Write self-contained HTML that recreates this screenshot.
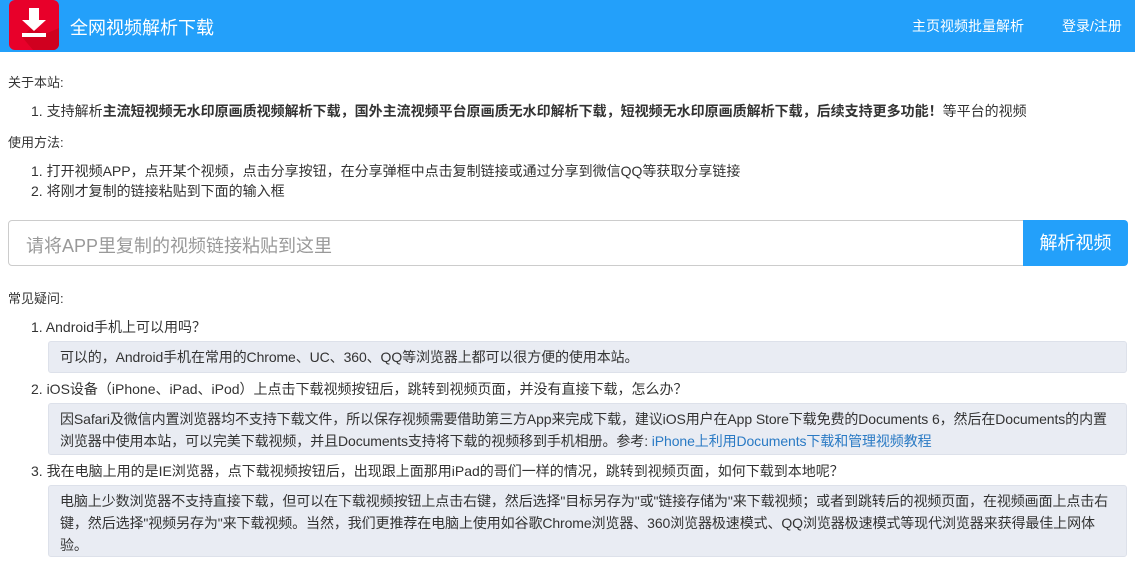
<!DOCTYPE html>
<html><head><meta charset="utf-8"><style>
*{margin:0;padding:0;box-sizing:border-box}
body{width:1135px;height:563px;overflow:hidden;background:#fff;font-family:"Liberation Sans","Noto Sans CJK SC",sans-serif;font-size:14px;color:#333}
.hd{height:52px;background:#23a0fa;position:relative;color:#fff}
.logo{position:absolute;left:9px;top:0;width:50px;height:50px;background:#e8002a;border-radius:6px;overflow:hidden}
.title{position:absolute;left:70px;top:14px;font-size:18px}
.nav{position:absolute;top:16px;font-size:14px}
.t{position:absolute;left:8px;font-size:13px}
.li{position:absolute;left:31px;white-space:nowrap}
.box{position:absolute;left:48px;right:8px;background:#e9ecf3;border:1px solid #dde1ea;border-radius:3px;padding:4px 11px;line-height:22px;letter-spacing:-0.1px}
a{color:#2a7ac4;text-decoration:none}
</style></head><body>
<div class="hd">
<div class="logo"><svg width="50" height="50"><polygon points="22,28 36,34 50,28 50,50 24,50 13,37" fill="#d0001f"/><rect x="20" y="8" width="10" height="13" fill="#fff"/><polygon points="13,20 37,20 25,31" fill="#fff"/><rect x="13" y="33" width="24" height="4" fill="#fff"/></svg></div>
<div class="title">全网视频解析下载</div>
<div class="nav" style="left:912px">主页视频批量解析</div>
<div class="nav" style="left:1062px">登录/注册</div>
</div>
<div class="t" style="top:72px">关于本站:</div>
<div class="li" style="top:101px">1. 支持解析<b>主流短视频无水印原画质视频解析下载，国外主流视频平台原画质无水印解析下载，短视频无水印原画质解析下载，后续支持更多功能！</b>等平台的视频</div>
<div class="t" style="top:132px">使用方法:</div>
<div class="li" style="top:161px">1. 打开视频APP，点开某个视频，点击分享按钮，在分享弹框中点击复制链接或通过分享到微信QQ等获取分享链接</div>
<div class="li" style="top:181px">2. 将刚才复制的链接粘贴到下面的输入框</div>
<div style="position:absolute;left:8px;top:220px;width:1016px;height:46px;border:1px solid #ccc;border-radius:4px 0 0 4px;font-size:18px;color:#999;padding:11px 17px">请将APP里复制的视频链接粘贴到这里</div>
<div style="position:absolute;left:1023px;top:220px;width:105px;height:46px;background:#23a0fa;border-radius:0 4px 4px 0;color:#fff;font-size:18px;text-align:center;line-height:46px">解析视频</div>
<div class="t" style="top:288px">常见疑问:</div>
<div class="li" style="top:317px">1. Android手机上可以用吗？</div>
<div class="box" style="top:341px;height:32px">可以的，Android手机在常用的Chrome、UC、360、QQ等浏览器上都可以很方便的使用本站。</div>
<div class="li" style="top:379px">2. iOS设备（iPhone、iPad、iPod）上点击下载视频按钮后，跳转到视频页面，并没有直接下载，怎么办？</div>
<div class="box" style="top:403px;height:52px">因Safari及微信内置浏览器均不支持下载文件，所以保存视频需要借助第三方App来完成下载，建议iOS用户在App Store下载免费的Documents 6，然后在Documents的内置浏览器中使用本站，可以完美下载视频，并且Documents支持将下载的视频移到手机相册。参考: <a>iPhone上利用Documents下载和管理视频教程</a></div>
<div class="li" style="top:461px">3. 我在电脑上用的是IE浏览器，点下载视频按钮后，出现跟上面那用iPad的哥们一样的情况，跳转到视频页面，如何下载到本地呢？</div>
<div class="box" style="top:485px;height:72px">电脑上少数浏览器不支持直接下载，但可以在下载视频按钮上点击右键，然后选择"目标另存为"或"链接存储为"来下载视频；或者到跳转后的视频页面，在视频画面上点击右键，然后选择"视频另存为"来下载视频。当然，我们更推荐在电脑上使用如谷歌Chrome浏览器、360浏览器极速模式、QQ浏览器极速模式等现代浏览器来获得最佳上网体验。</div>
</body></html>
